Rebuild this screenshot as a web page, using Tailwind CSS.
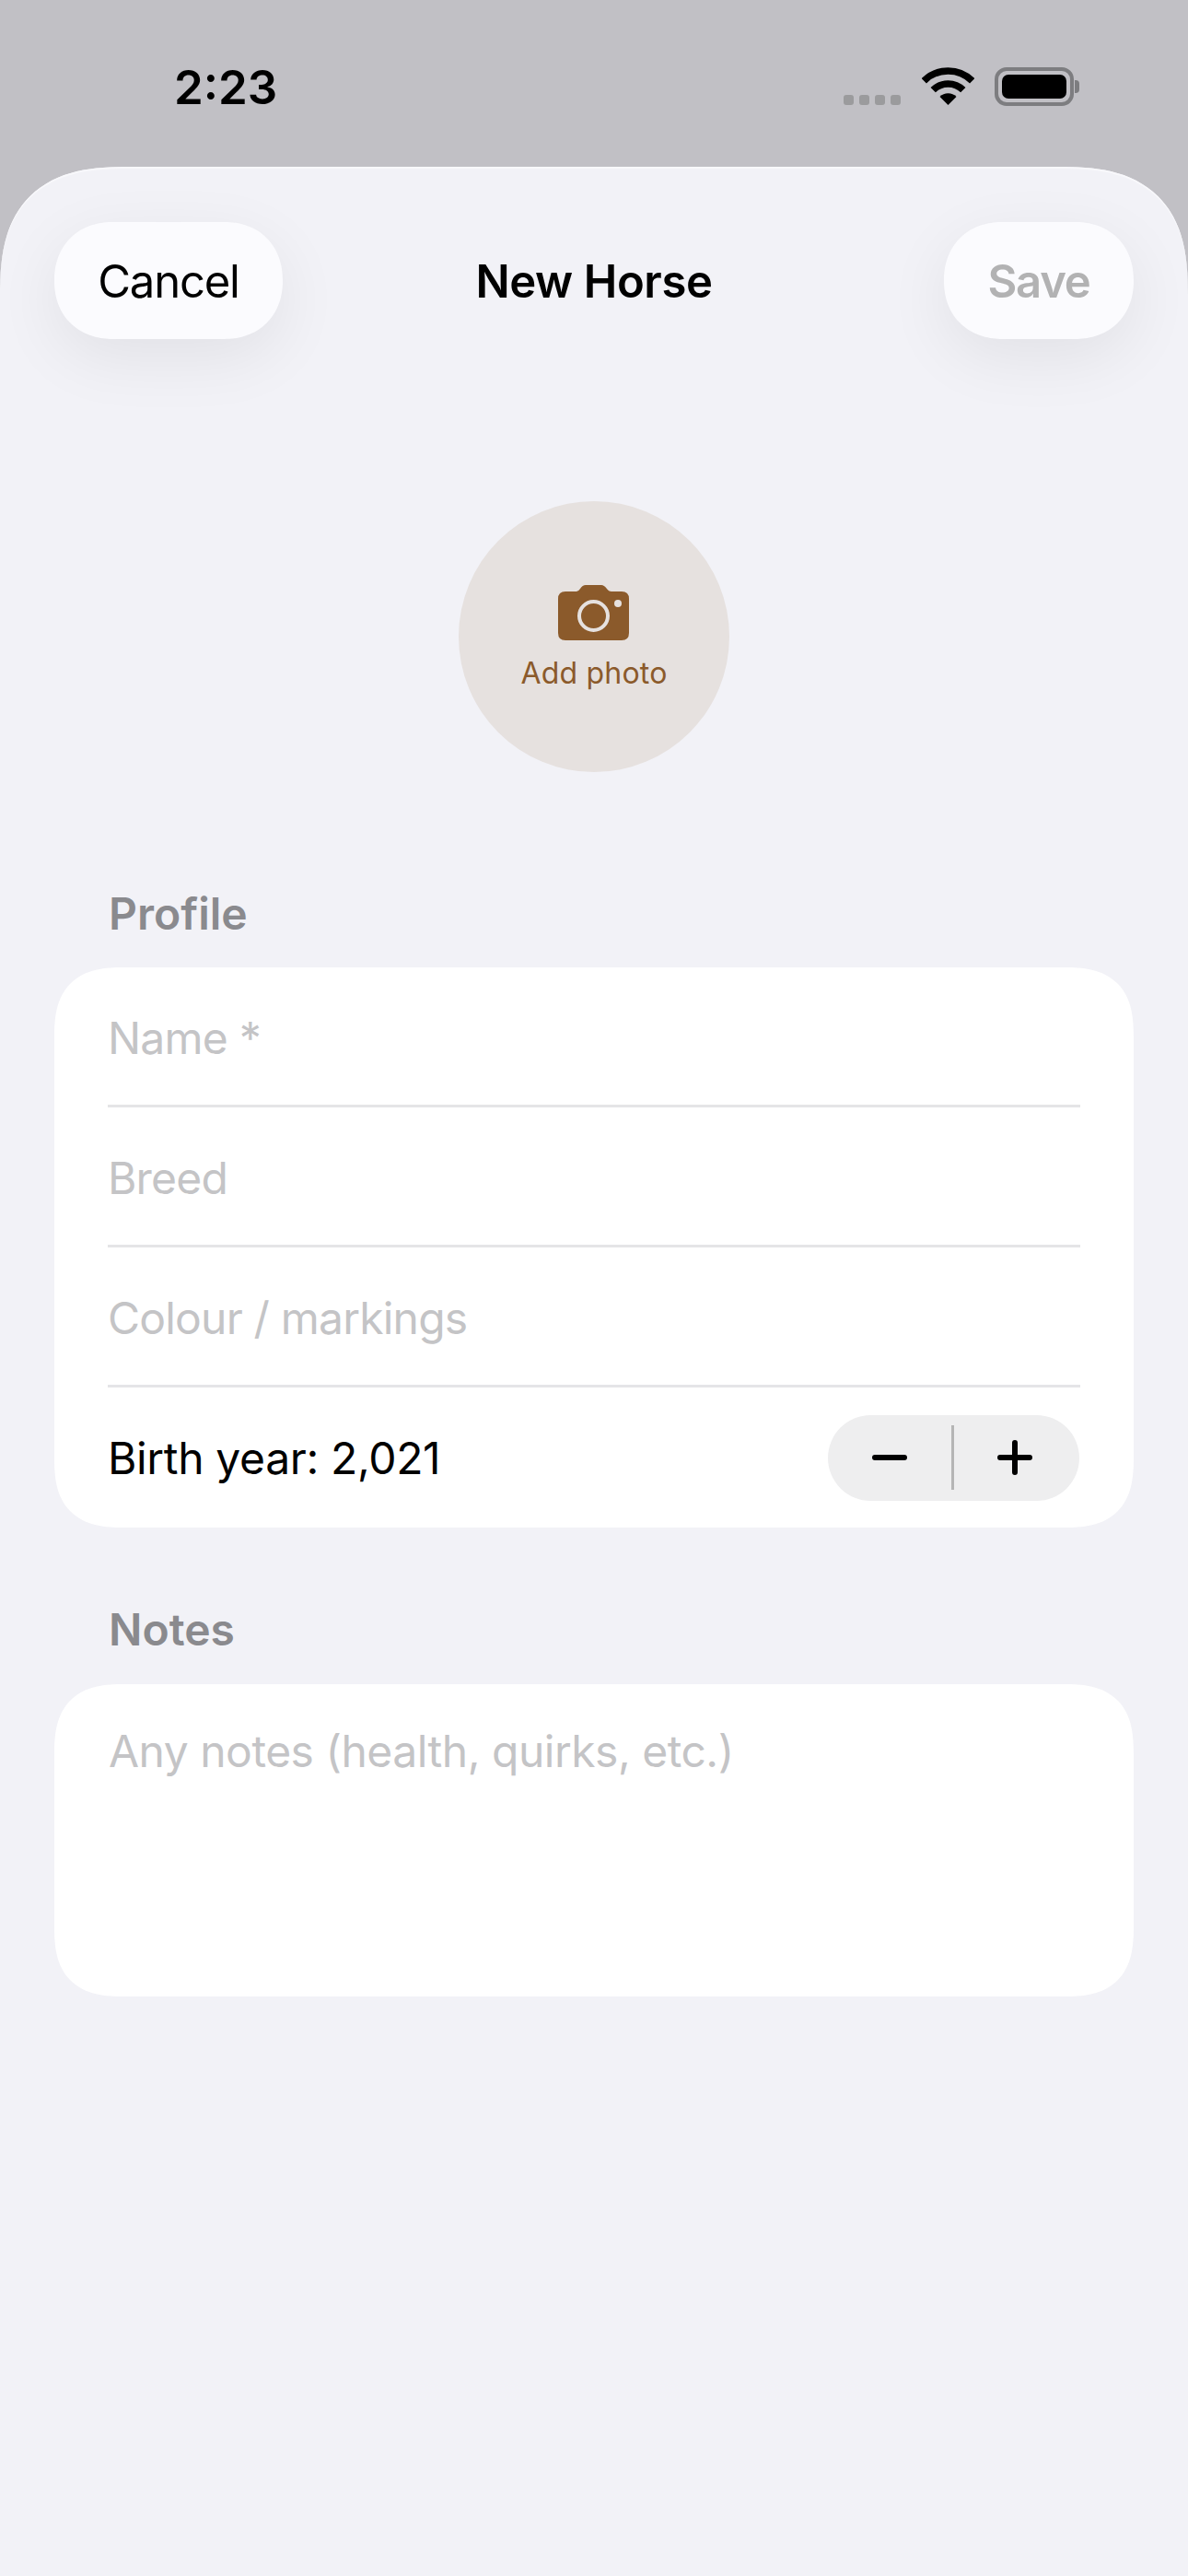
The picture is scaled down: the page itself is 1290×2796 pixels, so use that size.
<!DOCTYPE html>
<html lang="en">
<head>
    <meta charset="UTF-8">
    <meta name="viewport" content="width=device-width, initial-scale=1.0">
    <title>New Horse</title>
    <script src="https://cdn.jsdelivr.net/npm/@tailwindcss/browser@4"></script>
</head>
<body class="bg-[#c1c0c5] font-['Inter',sans-serif] antialiased">
    <div class="w-[1290px] h-[2796px] flex flex-col overflow-hidden">
        <!-- Status bar -->
        <div class="h-[181px] shrink-0 relative">
            <span class="absolute left-[189px] top-[64px] text-[51px] leading-[62px] font-semibold text-black">2:23</span>
            <div class="absolute left-[916px] top-[103px] flex gap-[6px]">
                <span class="w-[11px] h-[11px] rounded-[3px] bg-[#9b9b9d]"></span>
                <span class="w-[11px] h-[11px] rounded-[3px] bg-[#9b9b9d]"></span>
                <span class="w-[11px] h-[11px] rounded-[3px] bg-[#9b9b9d]"></span>
                <span class="w-[11px] h-[11px] rounded-[3px] bg-[#9b9b9d]"></span>
            </div>
            <svg class="absolute left-[1001px] top-[73px]" width="57" height="41" viewBox="0 0 57 41">
                <path d="M2.3 14.8 A37 37 0 0 1 54.7 14.8" fill="none" stroke="#000" stroke-width="7.5"/>
                <path d="M12.2 24.7 A23 23 0 0 1 44.8 24.7" fill="none" stroke="#000" stroke-width="7.5"/>
                <path d="M28.5 41 L19.5 32 A12.7 12.7 0 0 1 37.5 32 Z" fill="#000"/>
            </svg>
            <div class="absolute left-[1080px] top-[73px] w-[86px] h-[42px] rounded-[13px] border-[4px] border-[#7d7d80] p-[4px]">
                <div class="w-full h-full rounded-[7px] bg-black"></div>
            </div>
            <div class="absolute left-[1167px] top-[87px] w-[5px] h-[14px] rounded-r-[4px] bg-[#7d7d80]"></div>
        </div>

        <!-- Sheet -->
        <div class="flex-1 bg-[#f2f2f7] rounded-t-[140px] [corner-shape:superellipse(1.4)] shadow-[inset_0_2px_0_#f8f8fb] overflow-hidden px-[59px] pt-[60px]">
            <div class="grid grid-cols-[1fr_auto_1fr] items-center">
                <div class="justify-self-start w-[248px] h-[127px] rounded-[63px] [corner-shape:superellipse(1.1)] bg-[#fbfbfe] shadow-[0_20px_70px_rgba(0,0,0,0.07)] flex items-center justify-center pt-[2px] text-[49px] tracking-[-1.2px] text-black">Cancel</div>
                <div class="pt-[2px] text-[49px] font-semibold tracking-[-0.4px] text-black">New Horse</div>
                <div class="justify-self-end w-[206px] h-[127px] rounded-[63px] [corner-shape:superellipse(1.1)] bg-[#fbfbfe] shadow-[0_20px_70px_rgba(0,0,0,0.07)] flex items-center justify-center pt-[2px] text-[49px] font-semibold tracking-[-1.2px] text-[#b2b2b3]">Save</div>
            </div>

            <!-- Photo -->
            <div class="mt-[176px] mx-auto w-[294px] h-[294px] rounded-full bg-[#e6e1df] flex flex-col items-center pt-[91px]">
                <svg class="-ml-[1px]" width="77" height="60" viewBox="0 0 77 60">
                    <path d="M8 7 H20 Q22 7 24 4 Q26.500 0 30 0 H47 Q50 0 52.500 3.500 Q55 7 58 7 H69 Q77 7 77 15 V52 Q77 60 69 60 H8 Q0 60 0 52 V15 Q0 7 8 7 Z" fill="#8b5a2b"/>
                    <circle cx="38.500" cy="33.500" r="15.500" fill="none" stroke="#e6e1df" stroke-width="4"/>
                    <circle cx="65" cy="20" r="4" fill="#e6e1df"/>
                </svg>
                <span class="mt-[16px] text-[32px] leading-[40px] tracking-[0.2px] text-[#8b5a2b]">Add photo</span>
            </div>

            <!-- Profile -->
            <div class="mt-[125px] mb-[29px] pl-[59px] text-[48px] leading-[58px] font-semibold text-[#8a8a8e]">Profile</div>
            <div class="bg-white rounded-[76px] [corner-shape:superellipse(1.4)] px-[58px]">
                <div class="h-[145px] flex items-center pt-[4px] text-[48px] tracking-[-0.8px] text-[#c4c4c6] border-b-[3px] border-[#e5e5e7] box-content">Name *</div>
                <div class="h-[145px] flex items-center pt-[4px] text-[48px] tracking-[-0.8px] text-[#c4c4c6] border-b-[3px] border-[#e5e5e7] box-content">Breed</div>
                <div class="h-[145px] flex items-center pt-[4px] text-[48px] tracking-[-0.8px] text-[#c4c4c6] border-b-[3px] border-[#e5e5e7] box-content">Colour / markings</div>
                <div class="h-[152px] flex items-center justify-between">
                    <span class="pt-[2px] text-[48px] tracking-[-0.35px] text-black">Birth year: 2,021</span>
                    <div class="mr-[1px] w-[273px] h-[93px] rounded-full bg-[#eeeeef] flex items-center">
                        <div class="flex-1 flex justify-center">
                            <svg width="38" height="38" viewBox="0 0 38 38"><path d="M3 19 H35" stroke="#000" stroke-width="6" stroke-linecap="round"/></svg>
                        </div>
                        <div class="w-[3px] h-[70px] bg-[#b5b5b5]"></div>
                        <div class="flex-1 flex justify-center pr-[3px]">
                            <svg width="38" height="38" viewBox="0 0 38 38"><path d="M3 19 H35 M19 3 V35" stroke="#000" stroke-width="6" stroke-linecap="round"/></svg>
                        </div>
                    </div>
                </div>
            </div>

            <!-- Notes -->
            <div class="mt-[82px] mb-[30px] pl-[59px] text-[48px] leading-[58px] font-semibold text-[#8a8a8e]">Notes</div>
            <div class="bg-white rounded-[76px] [corner-shape:superellipse(1.4)] h-[339px] px-[59px] pt-[44px]">
                <div class="text-[48px] leading-[58px] tracking-[-0.5px] text-[#c4c4c6]">Any notes (health, quirks, etc.)</div>
            </div>
        </div>
    </div>
</body>
</html>
